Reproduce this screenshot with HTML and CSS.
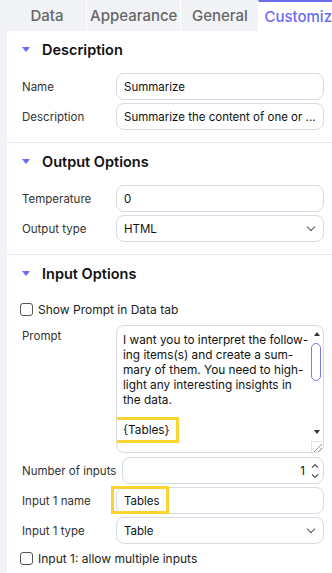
FILE: index.html
```html
<!DOCTYPE html>
<html lang="en">
<head>
    <meta charset="UTF-8">
    <meta name="viewport" content="width=device-width, initial-scale=1.0">
    <title>Customize</title>
    <link rel="stylesheet" href="styles.css">
</head>
<body>

    <!-- Tabs -->
    <div class="tabs">
        <div class="tab">Data</div>
        <div class="tab">Appearance</div>
        <div class="tab">General</div>
        <div class="tab active">Customize</div>
    </div>

    <div class="panel">

        <section class="group">
            <h2 class="group-title"><span class="caret"></span>Description</h2>
            <div class="field">
                <label>Name</label>
                <div class="input">Summarize</div>
            </div>
            <div class="field">
                <label>Description</label>
                <div class="input">Summarize the content of one or ...</div>
            </div>
        </section>

        <section class="group">
            <h2 class="group-title"><span class="caret"></span>Output Options</h2>
            <div class="field">
                <label>Temperature</label>
                <div class="input">0</div>
            </div>
            <div class="field">
                <label>Output type</label>
                <div class="input select">HTML <span class="chevron"></span></div>
            </div>
        </section>

        <section class="group last">
            <h2 class="group-title"><span class="caret"></span>Input Options</h2>

            <div class="check-row">
                <span class="checkbox"></span> Show Prompt in Data tab
            </div>

            <div class="field top">
                <label>Prompt</label>
                <div class="textarea">
                    <div class="textarea-text">
                        I want you to interpret the follow-<br>
                        ing items(s) and create a sum-<br>
                        mary of them. You need to high-<br>
                        light any interesting insights in<br>
                        the data.<br>
                        <br>
                        <span class="mark">{Tables}</span><br>
                        <br>
                    </div>
                    <div class="scrollbar">
                        <span class="arrow-up"></span>
                        <span class="thumb"></span>
                        <span class="arrow-down"></span>
                        <span class="grip"></span>
                    </div>
                </div>
            </div>

            <div class="field">
                <label>Number of inputs</label>
                <div class="input number">1
                    <span class="spinner">
                        <svg width="8" height="18" viewBox="0 0 8 18"><path d="M1 5.5 L4 2.5 L7 5.5" fill="none" stroke="#555" stroke-width="1.2"/><path d="M1 12.5 L4 15.5 L7 12.5" fill="none" stroke="#555" stroke-width="1.2"/></svg>
                    </span>
                </div>
            </div>
            <div class="field">
                <label>Input 1 name</label>
                <div class="input"><span class="mark wide">Tables</span></div>
            </div>
            <div class="field">
                <label>Input 1 type</label>
                <div class="input select">Table <span class="chevron"></span></div>
            </div>

            <div class="check-row bottom">
                <span class="checkbox"></span> Input 1: allow multiple inputs
            </div>
        </section>

    </div>

</body>
</html>
```

FILE: styles.css
```css
    body, html {
        margin: 0;
        padding: 0;
        font-family: Inter, "Noto Sans", sans-serif;
    }

    body {
        background-color: #f2f3f7;
        color: #222;
        overflow: hidden;
    }

    .tabs {
        display: flex;
        height: 31px;
        padding-left: 8px;
        white-space: nowrap;
        overflow: hidden;
    }

    .tab {
        box-sizing: border-box;
        min-width: 78px;
        padding: 0 3px;
        text-align: center;
        line-height: 31px;
        font-size: 15px;
        font-weight: 500;
        color: #666;
        border-left: 1px solid #fff;
        flex-shrink: 0;
    }

    .tab:first-child {
        border-left: none;
    }

    .tab.active {
        background-color: #fff;
        color: #6b6bf2;
        border-top: 2px solid #6b6bf2;
        line-height: 29px;
        text-align: left;
        padding-left: 5px;
    }

    .panel {
        margin-left: 7px;
        background-color: #fff;
        min-height: 600px;
    }

    .group {
        padding: 8px 8px 12px 15px;
        border-bottom: 1px solid #ececf0;
    }

    .group.last {
        border-bottom: none;
    }

    .group-title {
        display: flex;
        align-items: center;
        margin: 0 0 14px 0;
        height: 20px;
        font-size: 14.5px;
        font-weight: 600;
        color: #111;
    }

    .caret {
        width: 0;
        height: 0;
        border-left: 4.5px solid transparent;
        border-right: 4.5px solid transparent;
        border-top: 5px solid #6b6bf2;
        margin-right: 12px;
    }

    .field {
        display: flex;
        align-items: center;
        gap: 6px;
        margin-bottom: 3px;
        font-size: 11.5px;
    }

    .field:last-child {
        margin-bottom: 0;
    }

    .field.top {
        align-items: flex-start;
        margin-bottom: 4px;
    }

    .field label {
        min-width: 88px;
        flex-shrink: 0;
        color: #333;
        line-height: 22px;
        white-space: nowrap;
    }

    .input {
        flex: 1;
        position: relative;
        height: 27px;
        box-sizing: border-box;
        border: 1px solid #d8dae2;
        border-radius: 8px;
        padding: 0 7px;
        display: flex;
        align-items: center;
        color: #111;
        font-size: 11.5px;
        white-space: nowrap;
    }

    .select {
        justify-content: space-between;
    }

    .chevron {
        width: 5px;
        height: 5px;
        border-right: 1.3px solid #555;
        border-bottom: 1.3px solid #555;
        transform: rotate(45deg);
        margin: -3px 2px 0 0;
    }

    .number {
        justify-content: flex-end;
        padding-right: 4px;
    }

    .spinner {
        display: flex;
        margin-left: 6px;
    }

    /* margin-top collapses with the title's 14px */
    .check-row {
        display: flex;
        align-items: center;
        gap: 5px;
        height: 16px;
        font-size: 12px;
        color: #222;
        margin: 18px 0 8px -2px;
    }

    .check-row.bottom {
        margin: 6px 0 0 -2px;
    }

    .checkbox {
        width: 11px;
        height: 11px;
        border: 1px solid #555;
        border-radius: 3px;
    }

    .textarea {
        flex: 1;
        display: flex;
        height: 128px;
        box-sizing: border-box;
        border: 1px solid #d8dae2;
        border-radius: 8px;
        overflow: hidden;
    }

    .textarea-text {
        flex: 1;
        padding: 7px 0 0 6px;
        font-size: 11.8px;
        line-height: 15px;
        color: #111;
        white-space: nowrap;
    }

    .scrollbar {
        position: relative;
        width: 11px;
        margin-right: 1px;
    }

    .arrow-up, .arrow-down {
        position: absolute;
        left: 3px;
        width: 0;
        height: 0;
        border-left: 3px solid transparent;
        border-right: 3px solid transparent;
    }

    .arrow-up {
        top: 6px;
        border-bottom: 4px solid #333;
    }

    .arrow-down {
        bottom: 18px;
        border-top: 4px solid #333;
    }

    .thumb {
        position: absolute;
        top: 17px;
        left: 0;
        width: 8px;
        height: 36px;
        border: 1px solid #7b7bf0;
        border-radius: 5px;
    }

    .grip {
        position: absolute;
        right: 0;
        bottom: 0;
        width: 10px;
        height: 10px;
        border-top: 1px solid #e3e3e6;
        border-left: 1px solid #e3e3e6;
        background: linear-gradient(135deg, transparent 55%, #888 56%, #888 62%, transparent 63%, transparent 75%, #888 76%, #888 82%, transparent 83%);
    }

    /* highlight boxes */
    .mark {
        position: relative;
    }

    .mark::after {
        content: "";
        position: absolute;
        left: -9px;
        right: -9px;
        top: -6px;
        bottom: -6px;
        border: 3px solid #fcd430;
    }

    .mark.wide::after {
        left: -13px;
        top: -8px;
    }
```
